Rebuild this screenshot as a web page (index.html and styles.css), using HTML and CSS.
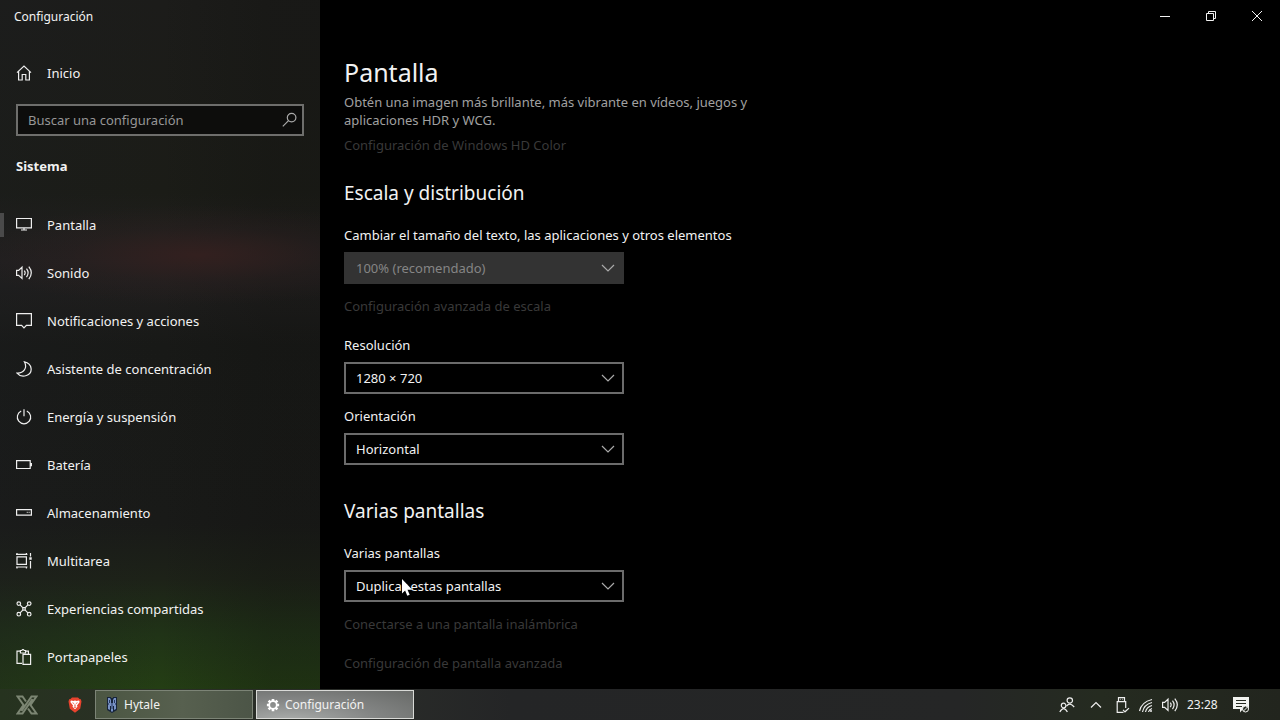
FILE: index.html
```html
<!DOCTYPE html>
<html lang="es">
<head>
<meta charset="utf-8">
<meta name="viewport" content="width=device-width, initial-scale=1">
<title>Configuración</title>
<link rel="stylesheet" href="styles.css">
</head>
<body>
<div class="window">
  <aside class="sidebar">
    <div class="window-title">Configuración</div>
    <a class="nav-item home" href="#">
      <svg class="icon" viewBox="0 0 16 16"><path d="M1 7.6 8 1l7 6.6M2.6 6.2V15h3.6V9.5h3.6V15h3.6V6.2"/></svg>
      <span>Inicio</span>
    </a>
    <div class="search">
      <input class="search-input" type="search" placeholder="Buscar una configuración" aria-label="Buscar una configuración">
      <svg class="icon search-icon" viewBox="0 0 16 16"><circle cx="10.6" cy="5.6" r="4.3"/><path d="M7.5 8.7 1.8 14.4"/></svg>
    </div>
    <h2 class="section">Sistema</h2>
    <nav class="nav">
      <a class="nav-item active" href="#"><svg class="icon" viewBox="0 0 16 16"><path d="M.6 1.5h14.8v9.4H.6zM8 11v2M5 13h6"/></svg><span>Pantalla</span></a>
      <a class="nav-item" href="#"><svg class="icon" viewBox="0 0 16 16"><path d="M.6 5.4h2L6 2.2v11.2L2.6 10.3h-2zM8.3 5.6q1.7 2.2 0 4.5M10.5 3.6q3.2 4.2 0 8.5M12.8 1.6q5 6.2 0 12.5"/></svg><span>Sonido</span></a>
      <a class="nav-item" href="#"><svg class="icon" viewBox="0 0 16 16"><path d="M.6.6h14.8v11.8h-5L8 14.9l-2.4-2.5h-5z"/></svg><span>Notificaciones y acciones</span></a>
      <a class="nav-item" href="#"><svg class="icon" viewBox="0 0 16 16"><path d="M8.4.8c8.1 1.7 9 11.2 2.1 13.7-3.4 1.2-7.2.3-9.5-2.4 6.5.3 10.8-4.9 7.4-11.3z"/></svg><span>Asistente de concentración</span></a>
      <a class="nav-item" href="#"><svg class="icon" viewBox="0 0 16 16"><path d="M8 .2v7M5.2 2a6.7 6.7 0 1 0 5.6 0"/></svg><span>Energía y suspensión</span></a>
      <a class="nav-item" href="#"><svg class="icon" viewBox="0 0 16 16"><path d="M.6 3.7h13.6v7.8H.6zM15.4 6v3.200"/></svg><span>Batería</span></a>
      <a class="nav-item" href="#"><svg class="icon" viewBox="0 0 16 16"><path d="M.6 4.600h14.8v5.600H.6zM10.8 7.400h.8M12.7 7.400h.8"/></svg><span>Almacenamiento</span></a>
      <a class="nav-item" href="#"><svg class="icon" viewBox="0 0 16 16"><path d="M1 3.8h9.4v7.6H1zM0 1.3h11.4M1 0v1.3M10.4 0v1.3M0 14h11.4M1 14v1.6M10.4 14v1.6M14.5 0v3.5M14.5 8v7.5"/><path class="solid" d="M13.3 4.3h2.4v2.4h-2.4z"/></svg><span>Multitarea</span></a>
      <a class="nav-item" href="#"><svg class="icon" viewBox="0 0 16 16"><circle cx="2.8" cy="2.6" r="1.8"/><circle cx="13.2" cy="2.6" r="1.8"/><circle cx="2.8" cy="13.2" r="1.8"/><circle cx="13.2" cy="13.2" r="1.8"/><path d="m4.1 3.9 2.7 2.7h2.4l2.7-2.7M4.1 11.9l2.7-2.7h2.4l2.7 2.7M6.8 6.6v2.6M9.2 6.6v2.6"/></svg><span>Experiencias compartidas</span></a>
      <a class="nav-item" href="#"><svg class="icon" viewBox="0 0 16 16"><path d="M6 14.4H1V2.2h3.4V4h5.2V2.2h2.8V5M4.4 2.6V1.5h1.4Q7-.6 8.2 1.5h1.4v1.1M7 5.4h7.6v10H7z"/></svg><span>Portapapeles</span></a>
    </nav>
  </aside>

  <section class="content">
    <header class="caption">
      <button class="caption-button" type="button" aria-label="Minimizar"><svg class="caption-icon" viewBox="0 0 12 12"><path d="M1 6.5h10"/></svg></button>
      <button class="caption-button" type="button" aria-label="Restaurar"><svg class="caption-icon" viewBox="0 0 12 12"><path d="M1.5 3.5h7v7h-7zM3.5 3.5v-2h7v7h-2"/></svg></button>
      <button class="caption-button" type="button" aria-label="Cerrar"><svg class="caption-icon" viewBox="0 0 12 12"><path d="m1 1 10 10M11 1 1 11"/></svg></button>
    </header>
    <main class="page">
      <h1 class="page-title">Pantalla</h1>
      <p class="description">Obtén una imagen más brillante, más vibrante en vídeos, juegos y aplicaciones HDR y WCG.</p>
      <a class="link near">Configuración de Windows HD Color</a>

      <h2 class="group-title first">Escala y distribución</h2>
      <label class="label" for="scale">Cambiar el tamaño del texto, las aplicaciones y otros elementos</label>
      <div class="dropdown">
        <select class="select" id="scale" disabled><option>100% (recomendado)</option></select>
        <svg class="chevron" viewBox="0 0 14 8"><path d="m1 1 6 6 6-6"/></svg>
      </div>
      <a class="link">Configuración avanzada de escala</a>
      <label class="label spaced" for="resolution">Resolución</label>
      <div class="dropdown">
        <select class="select" id="resolution"><option>1280 × 720</option></select>
        <svg class="chevron" viewBox="0 0 14 8"><path d="m1 1 6 6 6-6"/></svg>
      </div>
      <label class="label close" for="orientation">Orientación</label>
      <div class="dropdown">
        <select class="select" id="orientation"><option>Horizontal</option></select>
        <svg class="chevron" viewBox="0 0 14 8"><path d="m1 1 6 6 6-6"/></svg>
      </div>

      <h2 class="group-title">Varias pantallas</h2>
      <label class="label" for="displays">Varias pantallas</label>
      <div class="dropdown">
        <select class="select" id="displays"><option>Duplicar estas pantallas</option></select>
        <svg class="chevron" viewBox="0 0 14 8"><path d="m1 1 6 6 6-6"/></svg>
        <svg class="pointer" viewBox="0 0 12 18"><path d="M1 0v14.5l3.1-3 2.2 5.3 2.4-1-2.2-5.1h4.7z"/></svg>
      </div>
      <a class="link">Conectarse a una pantalla inalámbrica</a>
      <a class="link spaced">Configuración de pantalla avanzada</a>
    </main>
  </section>
</div>

<footer class="taskbar">
  <button class="launcher start" type="button" aria-label="Inicio"><svg class="start-icon" viewBox="0 0 22 20"><path d="M10 6.500 6.500 1.500h-5l6 8.500-6 8.500h5L16.500 4M12 13.500l3.500 5h5l-6-8.500 6-8.500h-5L5.500 16"/></svg></button>
  <button class="launcher brave" type="button" aria-label="Brave"><svg class="brave-icon" viewBox="0 0 14 16"><path fill="#e8432e" d="M4 .5h6l1.500 1.500 1.300.2.700 2.300-1.300 7.300L7 15.800l-5.200-4L.5 4.500l.7-2.300L2.500 2z"/><path fill="#fff" d="m3 3.500 2.500.5L7 3.500 8.500 4l2.500-.500.700 1.500L9 8.500l.5 1.300L7 12.300 4.500 9.800 5 8.500 2.300 5z"/><path fill="#e8432e" d="m4 5.200 2 .7-.5 1zM10 5.200l-2 .7.500 1zM7 6l.6 2.800L7 9.600l-.6-.8zM5.500 10 7 9.500l1.500.5L7 11z"/></svg></button>
  <button class="task" type="button"><svg class="task-icon hytale" viewBox="0 0 14 16"><path fill="#17243a" d="M2 0h4v1h2V0h4v13l-5 3-5-3z"/><path fill="#7892c5" d="M3 1h2l1 2v3h2V3l1-2h2v5l-1 1 1 1v4l-2 1V9H8v5l-1 1-1-1V9H5v4l-2-1V8l1-1-1-1z"/><path fill="#293b61" d="M4 3h1v3H4zM9 3h1v3H9zM6.500 6h1v6h-1z"/></svg><span>Hytale</span></button>
  <button class="task current" type="button"><svg class="task-icon" viewBox="0 0 16 16"><circle class="gear" cx="8" cy="8" r="4.300"/><path class="teeth" d="M8 1v2.500M8 12.500V15M1 8h2.500M12.500 8H15M3 3l1.900 1.900M11.100 11.100 13 13M13 3l-1.900 1.900M4.900 11.100 3 13"/></svg><span>Configuración</span></button>
  <div class="tray">
    <button class="tray-button people" type="button" aria-label="Contactos"><svg class="tray-icon" viewBox="0 0 16 16"><circle cx="10.800" cy="3.500" r="2.700"/><circle cx="4.600" cy="8.500" r="2.300"/><path d="M7.500 9.200q3.300-4.500 7.700.8M.8 15q3.800-6.800 7.600 0"/></svg></button>
    <button class="tray-button arrow" type="button" aria-label="Mostrar iconos ocultos"><svg class="tray-icon" viewBox="0 0 16 16"><path d="m3 10.500 5-5 5 5"/></svg></button>
    <button class="tray-button" type="button" aria-label="Quitar hardware"><svg class="tray-icon" viewBox="0 0 16 16"><path d="M4.500 4.500V.7h6v3.800M6.400 2.400h.5M8.200 2.400h.5M9.500 15.300H3.200V4.600h8.500V11M9 12.800l2 2 4-3.700"/></svg></button>
    <button class="tray-button" type="button" aria-label="Red"><svg class="tray-icon" viewBox="0 0 16 16"><path d="M1.500 14Q3.500 5 14 2.500M4.500 15Q6 7.500 14 5.500M7.500 15Q8.500 10 14 8.500M10.500 15q.5-2.500 3.500-3.500"/><circle class="solid" cx="13" cy="14" r="1"/></svg></button>
    <button class="tray-button sound" type="button" aria-label="Volumen"><svg class="tray-icon" viewBox="0 0 16 16"><path d="M.6 5.400h2L6 2.200v11.200l-3.400-3.100h-2zM8.300 5.600q1.700 2.200 0 4.500M10.500 3.600q3.200 4.200 0 8.500M12.800 1.600q5 6.200 0 12.500"/></svg></button>
    <time class="clock">23:28</time>
    <button class="tray-button notices" type="button" aria-label="Notificaciones"><svg class="notice-icon" viewBox="0 0 18 18"><path fill="#f2f3f0" d="M1 1h16v12h-6l-3 3.500V13H1z"/><path stroke="#252a20" d="M4 4.500h10M4 7.500h10M4 10.500h6"/><circle cx="13.500" cy="13" r="3" fill="#252a20" stroke="#f2f3f0"/><path stroke="#f2f3f0" d="m11.500 15 4-4"/></svg></button>
  </div>
</footer>
</body>
</html>
```

FILE: styles.css
```css
* {
  box-sizing: border-box;
}

body {
  display: grid;
  grid-template-rows: minmax(0, 1fr) auto;
  height: 100vh;
  margin: 0;
  overflow: hidden;
  background: #000;
  color: #f2f2f2;
  font-family: "Noto Sans", "Open Sans", sans-serif;
  font-size: 13px;
  line-height: 20px;
}

button,
input,
select {
  font: inherit;
  color: inherit;
}

button {
  display: flex;
  align-items: center;
  justify-content: center;
  padding: 0;
  border: 0;
  background: transparent;
}

a {
  color: inherit;
  text-decoration: none;
}

h1,
h2,
p {
  margin: 0;
}

svg {
  flex: none;
  fill: none;
}

.window {
  display: grid;
  grid-template-columns: 320px minmax(0, 1fr);
  min-height: 0;
}

.sidebar {
  overflow: hidden;
  background:
    radial-gradient(ellipse 240px 50px at 62% 37%, #33201f 0%, #2c202066 55%, transparent 100%),
    linear-gradient(90deg, #1c1e2055, transparent 50%, #10100e44 85%),
    linear-gradient(#1c1c1a 0%, #1b1c17 28%, #222020 38%, #181917 50%, #191a18 76%, #1d2218 84%, #203317 92%, #243e14 100%);
}

.window-title {
  padding: 7px 14px 5px;
  font-size: 12px;
}

.nav-item {
  display: flex;
  align-items: center;
  gap: 15px;
  height: 48px;
  padding: 0 16px;
}

.nav .icon {
  margin-bottom: 1px;
}

.home {
  margin: 17px 0 7px;
}

.icon,
.tray-icon {
  width: 16px;
  height: 16px;
  stroke: #eee;
  stroke-width: 1.2;
}

.search {
  display: flex;
  align-items: center;
  height: 32px;
  margin: 0 16px;
  padding: 0 5px 0 10px;
  border: 2px solid #6e6e6c;
  background: #0d0d0c;
}

.search-input {
  flex: 1;
  min-width: 0;
  padding: 0;
  border: 0;
  outline: 0;
  background: transparent;
}

.search-input::placeholder {
  color: #969696;
  opacity: 1;
}

.search-icon {
  stroke: #aaa;
}

.section {
  margin: 20px 16px 25px;
  font-size: 13px;
  line-height: 20px;
}

.active {
  background: linear-gradient(#4a4a4a, #4a4a4a) left center / 4px 24px no-repeat;
}

.solid {
  fill: #eee;
  stroke: none;
}

.content {
  min-width: 0;
  overflow: hidden;
}

.caption {
  display: flex;
  justify-content: flex-end;
}

.caption-button {
  width: 46px;
  height: 32px;
}

.caption-icon {
  width: 12px;
  height: 12px;
  stroke: #f2f2f2;
}

.page {
  display: flex;
  flex-direction: column;
  align-items: flex-start;
  max-width: 464px;
  padding: 20px 24px 16px;
}

.page-title {
  font-size: 25px;
  font-weight: 400;
  line-height: 40px;
}

.description {
  margin-top: 1px;
  color: #a0a0a0;
  line-height: 18px;
}

.link {
  margin-top: 12px;
  color: #393939;
}

.link.near {
  margin-top: 6px;
}

.group-title {
  margin-top: 32px;
  font-size: 19px;
  font-weight: 400;
  line-height: 28px;
}

.group-title.first {
  margin-top: 24px;
}

.label {
  margin-top: 18px;
}

.label.close {
  margin-top: 12px;
}

.spaced {
  margin-top: 19px;
}

.dropdown {
  position: relative;
  display: grid;
  align-items: center;
  width: 280px;
  max-width: 100%;
  margin-top: 7px;
}

.select {
  grid-area: 1 / 1;
  width: 100%;
  height: 32px;
  padding: 0 32px 0 10px;
  border: 2px solid #6b6b6b;
  border-radius: 0;
  appearance: none;
  background: #000;
}

.select:disabled {
  border-color: #333;
  background: #333;
  color: #858585;
  opacity: 1;
}

.chevron {
  grid-area: 1 / 1;
  justify-self: end;
  width: 14px;
  height: 8px;
  margin-right: 9px;
  stroke: #aaa;
  stroke-width: 1.2;
  pointer-events: none;
}

.pointer {
  position: absolute;
  top: 9px;
  left: 57px;
  width: 12px;
  height: 18px;
  fill: #fff;
}

.taskbar {
  display: flex;
  height: 31px;
  background: linear-gradient(90deg, #26331f 0%, #293024 8%, #292b29 30%, #242526 40%, #252626 75%, #252b20 86%, #22251e 100%);
}

.launcher {
  width: 40px;
}

.start {
  width: 54px;
}

.start-icon {
  width: 22px;
  height: 20px;
  stroke: #7c8673;
  stroke-width: 2;
}

.brave {
  width: 41px;
}

.brave-icon {
  width: 14px;
  height: 16px;
}

.task {
  justify-content: flex-start;
  gap: 5px;
  width: 158px;
  height: 29px;
  margin: 1px 3px 0 0;
  padding: 0 9px;
  border: 1px solid #7c8476;
  background: linear-gradient(90deg, #4b5642, #57604f 55%, #4c5547);
  font-size: 12px;
}

.task.current {
  border-color: #d9dad7;
  background: radial-gradient(ellipse at 20% 110%, #aaadab, #838584 50%, #676967 100%);
}

.task-icon {
  width: 14px;
  height: 14px;
}

.hytale {
  height: 16px;
}

.gear {
  stroke: #fff;
  stroke-width: 2;
}

.teeth {
  stroke: #fff;
  stroke-width: 3;
}

.tray {
  display: flex;
  align-items: center;
  margin-left: auto;
  padding-right: 24px;
}

.tray-button {
  width: 24px;
  height: 31px;
}

.people,
.arrow {
  width: 29px;
}

.clock {
  width: 44px;
  padding-left: 5px;
  font-size: 12px;
}

.notices {
  width: 30px;
}

.notice-icon {
  width: 18px;
  height: 18px;
}
```
